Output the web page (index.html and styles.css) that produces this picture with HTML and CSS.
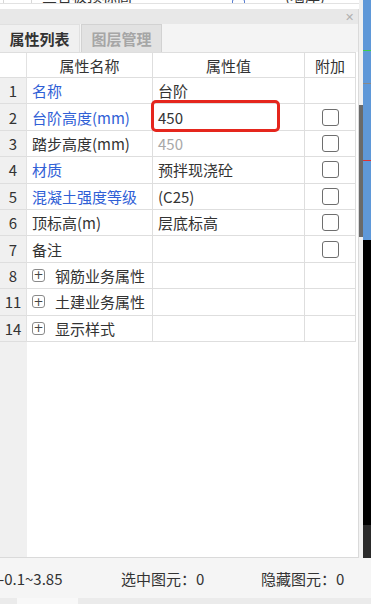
FILE: index.html
```html
<!DOCTYPE html>
<html lang="zh-CN">
<head>
<meta charset="utf-8">
<title>属性列表</title>
<link rel="stylesheet" href="styles.css">
</head>
<body>
<div class="app">
  <div class="main">
    <div class="left">
      <div class="topcut">
        <div class="topcut-row">
          <span class="tc-box"></span>
          <span class="tc-text">三合板顶标高</span>
          <span class="tc-chk"></span>
          <span class="tc-val">(墙厚)</span>
        </div>
      </div>
      <div class="panel">
        <div class="titlebar"><span class="close">✕</span></div>
        <div class="tabs">
          <div class="tab active">属性列表</div>
          <div class="tab">图层管理</div>
        </div>
        <div class="table-wrap">
          <div class="grid">
            <div class="c num head"></div>
            <div class="c head center">属性名称</div>
            <div class="c head center">属性值</div>
            <div class="c head center">附加</div>

            <div class="c num">1</div>
            <div class="c name blue">名称</div>
            <div class="c val">台阶</div>
            <div class="c add"></div>

            <div class="c num">2</div>
            <div class="c name blue">台阶高度(mm)</div>
            <div class="c val">450</div>
            <div class="c add"><span class="chk"></span></div>

            <div class="c num">3</div>
            <div class="c name">踏步高度(mm)</div>
            <div class="c val gray">450</div>
            <div class="c add"><span class="chk"></span></div>

            <div class="c num">4</div>
            <div class="c name blue">材质</div>
            <div class="c val">预拌现浇砼</div>
            <div class="c add"><span class="chk"></span></div>

            <div class="c num">5</div>
            <div class="c name blue">混凝土强度等级</div>
            <div class="c val">(C25)</div>
            <div class="c add"><span class="chk"></span></div>

            <div class="c num">6</div>
            <div class="c name">顶标高(m)</div>
            <div class="c val">层底标高</div>
            <div class="c add"><span class="chk"></span></div>

            <div class="c num">7</div>
            <div class="c name">备注</div>
            <div class="c val"></div>
            <div class="c add"><span class="chk"></span></div>

            <div class="c num">8</div>
            <div class="c name grp"><span class="plus">+</span>钢筋业务属性</div>
            <div class="c val"></div>
            <div class="c add"></div>

            <div class="c num">11</div>
            <div class="c name grp"><span class="plus">+</span>土建业务属性</div>
            <div class="c val"></div>
            <div class="c add"></div>

            <div class="c num">14</div>
            <div class="c name grp"><span class="plus">+</span>显示样式</div>
            <div class="c val"></div>
            <div class="c add"></div>
          </div>
          <div class="highlight"></div>
        </div>
      </div>
    </div>
    <div class="splitter"></div>
    <div class="viewport"></div>
  </div>
  <div class="status">
    <span class="st-range">-0.1~3.85</span>
    <span class="st-sel">选中图元：0</span>
    <span class="st-hide">隐藏图元：0</span>
  </div>
  <div class="bottom"><div class="bottom-blk"></div></div>
</div>
</body>
</html>
```

FILE: styles.css
```css
* { box-sizing: border-box; }
html, body { margin: 0; padding: 0; }
body {
  width: 371px;
  height: 604px;
  overflow: hidden;
  background: #fff;
  font-family: "Noto Sans CJK SC", "Noto Sans", sans-serif;
  font-size: 15px;
  color: #333;
}
.app { display: flex; flex-direction: column; height: 604px; }
.main { display: flex; height: 558px; }

.left { width: 359px; display: flex; flex-direction: column; }

.topcut { height: 9px; background: #fff; }
.topcut-row {
  height: 4px;
  overflow: hidden;
  display: flex;
  align-items: flex-end;
  border-bottom: 1px solid #e2e2e2;
  position: relative;
}
.tc-box { width: 29px; height: 10px; margin-left: 3px; border: 1px solid #d8d8d8; align-self: flex-end; margin-bottom: -6px; }
.tc-text { margin-left: 10px; font-size: 15px; line-height: 15px; color: #333; height: 4px; overflow: hidden; display: flex; align-items: flex-end; }
.tc-chk { width: 13px; height: 10px; margin-left: 100px; border: 1px solid #5b7fd0; border-radius: 2px; margin-bottom: -6px; }
.tc-val { margin-left: 40px; font-size: 15px; color: #333; height: 4px; overflow: hidden; display: flex; align-items: flex-end; line-height: 15px; }

.panel {
  flex: 1;
  display: flex;
  flex-direction: column;
  border-right: 1px solid #dadada;
  border-bottom: 1px solid #dadada;
  background: linear-gradient(to right, #f0f0f0 0 27px, #fff 27px);
}
.titlebar {
  height: 15px;
  background: #e8e8e8;
  display: flex;
  justify-content: flex-end;
  align-items: center;
  padding-right: 4px;
}
.close { font-size: 11px; color: #b0b0b0; line-height: 11px; }

.tabs {
  height: 28px;
  display: flex;
  background: #f4f4f4;
}
.tab {
  width: 81px;
  display: flex;
  align-items: center;
  justify-content: center;
  font-size: 15px;
  font-weight: bold;
  color: #a6a6a6;
  background: #e2e2e2;
  border: 1px solid #d2d2d2;
  border-bottom: none;
  margin-left: 1px;
}
.tab.active {
  background: #f0f0f0;
  color: #333;
  width: 80px;
  margin-left: 0;
  border-left: none;
  border-color: #e0e0e0;
}

.table-wrap { position: relative; width: 356px; }
.grid {
  display: grid;
  grid-template-columns: 27px 126px 152px 51px;
  grid-template-rows: 25px;
  grid-auto-rows: 26.4px;
  border-top: 1px solid #dedede;
}
.c {
  border-right: 1px solid #dedede;
  border-bottom: 1px solid #dedede;
  display: flex;
  align-items: center;
  white-space: nowrap;
  overflow: hidden;
  background: #fff;
}
.c.num { background: #f0f0f0; justify-content: center; border-right-color: #e2e2e2; }
.c.num.head { background: #fff; }
.c.head { font-size: 15px; }
.c.center { justify-content: center; }
.c.name { padding-left: 5px; }
.c.val { padding-left: 5px; }
.c.add { justify-content: center; }
.blue { color: #3060d6; }
.gray { color: #a8a8a8; }

.chk {
  width: 17px;
  height: 17px;
  border: 1px solid #6e6e6e;
  border-radius: 3px;
  background: #fff;
}
.grp { padding-left: 4px; }
.plus {
  width: 13px;
  height: 13px;
  border: 1px solid #8a8a8a;
  border-radius: 3px;
  display: inline-flex;
  align-items: center;
  justify-content: center;
  font-size: 12px;
  line-height: 1;
  color: #444;
  margin-right: 10px;
  font-family: "DejaVu Sans", sans-serif;
}

.highlight {
  position: absolute;
  left: 151px;
  top: 48px;
  width: 129px;
  height: 32px;
  border: 3px solid #e5261d;
  border-radius: 5px;
  pointer-events: none;
}

.splitter {
  width: 4px;
  background: linear-gradient(to bottom, #f0f0f0 0 105px, #6a6a6a 105px 237px, #f2f2f2 237px);
}
.viewport {
  width: 8px;
  background:
    linear-gradient(to bottom, transparent 50px, #3fd04a 50px 51px, transparent 51px),
    linear-gradient(to bottom, transparent 83px, #8a8a8a 83px 84px, transparent 84px),
    linear-gradient(to bottom, transparent 160px, #e03030 160px 161px, transparent 161px),
    linear-gradient(to bottom, #5f98d8 0 240px, #000 240px 525px, #2a2a2a 525px);
}

.status {
  height: 40px;
  background: #f5f5f5;
  display: flex;
  align-items: center;
  font-size: 15px;
  color: #333;
}
.st-range { width: 121px; margin-left: -1px; }
.st-sel { width: 140px; margin-left: 1px; }

.bottom { height: 6px; background: #ebebeb; display: flex; }
.bottom-blk { width: 61px; margin-left: 17px; background: #f8f8f8; }
```
